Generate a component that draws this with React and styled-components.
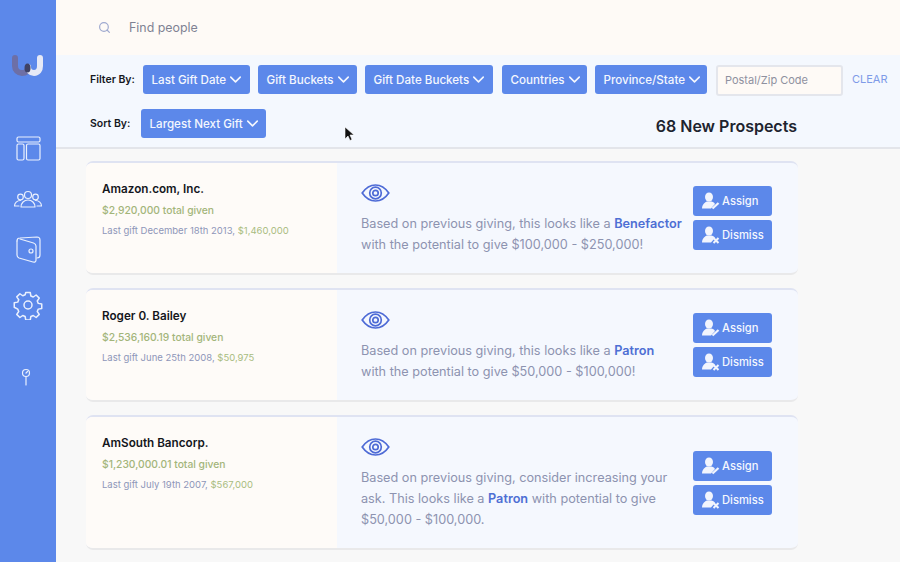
import styled, { createGlobalStyle } from "styled-components";
import { ChevronDown, Search } from "lucide-react";

const Global = createGlobalStyle`
  html, body {
    margin: 0;
    padding: 0;
    height: 100%;
    overflow: hidden;
    font-family: "Inter", "Liberation Sans", sans-serif;
  }
  * { box-sizing: border-box; }
`;

const Page = styled.div`
  display: flex;
  width: 900px;
  height: 562px;
  overflow: hidden;
  background: #f8f8f8;
  position: relative;
`;
const Sidebar = styled.nav`
  width: 56px;
  flex: none;
  background: #5c88ea;
  display: flex;
  flex-direction: column;
  align-items: center;
  padding-top: 52px;
`;
const Logo = styled.svg`
  width: 34px;
  height: 26px;
  flex: none;
  margin-bottom: 56px;
`;
const NavIcon = styled.svg`
  width: 30px;
  height: 30px;
  flex: none;
  margin-bottom: ${(p) => p.$gap}px;
  fill: none;
  stroke: #eaf0fd;
  stroke-width: 1.2;
  stroke-linecap: round;
  stroke-linejoin: round;
`;
const Main = styled.main`
  flex: 1;
  min-width: 0;
`;
const SearchBar = styled.div`
  height: 55px;
  background: #fefaf6;
  display: flex;
  align-items: center;
  padding-left: 42px;
  gap: 18px;
  color: #9fa9cf;
`;
const SearchText = styled.span`
  font-size: 12.4px;
  color: #7f8293;
`;
const FilterPanel = styled.section`
  height: 94px;
  background: #f4f8fe;
  border-bottom: 2px solid #e3e5ea;
  padding: 10px 12px 0 34px;
`;
const Row = styled.div`
  display: flex;
  align-items: flex-start;
  height: ${(p) => p.$h}px;
`;
const Label = styled.span`
  font-size: 10.5px;
  font-weight: 600;
  color: #16181f;
  line-height: 29px;
  width: ${(p) => p.$w}px;
  flex: none;
`;
const Drop = styled.button`
  height: 29px;
  width: ${(p) => p.$w}px;
  margin-right: ${(p) => p.$mr || 0}px;
  flex: none;
  border: 0;
  border-radius: 3px;
  background: #5c88ea;
  color: #f4f7fe;
  font: 500 11.6px "Inter", sans-serif;
  display: flex;
  align-items: center;
  padding: 0 0 0 8.5px;
  white-space: nowrap;
`;
const Zip = styled.div`
  width: 127px;
  height: 31px;
  flex: none;
  margin-left: 2px;
  border: 2px solid #e4e6ec;
  border-radius: 3px;
  background: #fefaf6;
  color: #8e919f;
  font-size: 11px;
  line-height: 27px;
  padding-left: 7px;
`;
const Clear = styled.span`
  margin-left: 9px;
  font-size: 11px;
  line-height: 29px;
  color: #7e9be8;
`;
const Count = styled.h2`
  margin: 0;
  width: 531px;
  text-align: right;
  font-size: 16px;
  font-weight: 600;
  line-height: 35px;
  color: #20232e;
`;
const List = styled.div`
  padding: 12px 0 0 30px;
  display: flex;
  flex-direction: column;
  gap: 13px;
`;
const Card = styled.article`
  width: 712px;
  height: ${(p) => p.$h}px;
  flex: none;
  display: flex;
  border-radius: 7px;
  overflow: hidden;
  border-top: 2px solid #dfe3f2;
  border-bottom: 2px solid #e9e9ea;
  background: #f5f8fe;
`;
const Donor = styled.div`
  width: 251px;
  flex: none;
  background: #fefbf8;
  padding: 18px 0 0 16px;
`;
const Name = styled.h3`
  margin: 0 0 5px;
  font-size: 11.7px;
  line-height: 16px;
  font-weight: 600;
  color: #14161c;
`;
const Total = styled.div`
  font-size: 10.3px;
  line-height: 16px;
  font-weight: 500;
  color: #a3b57a;
  margin-bottom: 5px;
`;
const Last = styled.div`
  font-size: 9.5px;
  line-height: 16px;
  color: #8e96b8;
`;
const Amount = styled.span`
  color: #a9bc80;
`;
const Pitch = styled.div`
  flex: 1;
  min-width: 0;
  padding: 21px 0 0 24px;
`;
const Eye = styled.svg`
  display: block;
  width: 29px;
  height: 18px;
  margin-bottom: 11px;
  fill: none;
  stroke: #4e6bd6;
  stroke-width: 1.7;
`;
const PitchText = styled.p`
  margin: 0;
  width: 327px;
  font-size: 12.7px;
  line-height: 21px;
  color: #8d93b0;
`;
const Strong = styled.b`
  font-weight: 600;
  color: #4e6fd4;
`;
const Actions = styled.div`
  width: 105px;
  flex: none;
  display: flex;
  flex-direction: column;
  justify-content: center;
  gap: 4px;
`;
const ActionBtn = styled.button`
  width: 79px;
  height: 30px;
  border: 0;
  border-radius: 3px;
  padding: 0 0 0 8px;
  background: #5c88ea;
  color: #f4f7fe;
  font: 500 11.2px "Inter", sans-serif;
  display: flex;
  align-items: center;
  gap: 1px;
`;
const ActionIcon = styled.svg`
  width: 20px;
  height: 20px;
  flex: none;
`;
const Cursor = styled.svg`
  position: absolute;
  left: 344px;
  top: 126px;
  width: 10px;
  height: 16px;
`;

const PersonIcon = ({ kind }) => (
  <ActionIcon viewBox="0 0 20 20">
    <ellipse cx="8" cy="6" rx="4" ry="4.600" fill="#f2f5fd" />
    <path d="M1 17.500c0-4 3-6.500 5-7h4.500c2 .5 3 1.500 3.500 2.500L10 17.500z" fill="#f2f5fd" />
    {kind === "assign" ? (
      <path d="M11.500 17.500l6-5.500" stroke="#f2f5fd" strokeWidth="2.200" />
    ) : (
      <path d="M12.500 13l5 5M17.500 13l-5 5" stroke="#f2f5fd" strokeWidth="2" />
    )}
  </ActionIcon>
);

const EyeIcon = () => (
  <Eye viewBox="0 0 29 18">
    <path d="M1.200 9C5 3.500 9.500 1 14.500 1S24 3.500 27.800 9C24 14.500 19.500 17 14.500 17S5 14.500 1.200 9z" />
    <circle cx="14.500" cy="9" r="5.800" />
    <circle cx="14.500" cy="9" r="2.700" />
  </Eye>
);

const filters = [
  { label: "Last Gift Date", w: 107, mr: 8 },
  { label: "Gift Buckets", w: 99, mr: 8 },
  { label: "Gift Date Buckets", w: 128, mr: 9 },
  { label: "Countries", w: 85, mr: 8 },
  { label: "Province/State", w: 112, mr: 7 },
];

const people = [
  {
    name: "Amazon.com, Inc.",
    total: "$2,920,000",
    date: "December 18th 2013",
    last: "$1,460,000",
    h: 114,
    text: (
      <>
        Based on previous giving, this looks like a <Strong>Benefactor</Strong> with the
        potential to give $100,000 - $250,000!
      </>
    ),
  },
  {
    name: "Roger 0. Bailey",
    total: "$2,536,160.19",
    date: "June 25th 2008",
    last: "$50,975",
    h: 114,
    text: (
      <>
        Based on previous giving, this looks like a <Strong>Patron</Strong>
        <br />
        with the potential to give $50,000 - $100,000!
      </>
    ),
  },
  {
    name: "AmSouth Bancorp.",
    total: "$1,230,000.01",
    date: "July 19th 2007",
    last: "$567,000",
    h: 135,
    text: (
      <>
        Based on previous giving, consider increasing your ask. This looks like a{" "}
        <Strong>Patron</Strong> with potential to give $50,000 - $100,000.
      </>
    ),
  },
];

const App = () => {
  return (
    <Page>
      <Global />
      <Sidebar>
        <Logo viewBox="0 0 34 26">
          <path d="M4 6v8c0 4 3 7 7 7s6-2 6-5" fill="none" stroke="#6d6fa6" strokeWidth="6" strokeLinecap="round" />
          <path d="M17 15c0 3 2 6 6 6s6-3 6-7V6" fill="none" stroke="#e6e9f6" strokeWidth="6" strokeLinecap="round" />
          <ellipse cx="16.500" cy="16" rx="3" ry="4.500" fill="#3f4266" />
        </Logo>
        <NavIcon $gap={21} viewBox="0 0 30 30">
          <rect x="4" y="3" width="23" height="5" rx="1.500" />
          <rect x="4" y="10" width="7" height="16" rx="1.500" />
          <rect x="13.500" y="10" width="13.500" height="16" rx="1.500" />
        </NavIcon>
        <NavIcon $gap={19} viewBox="0 0 30 30">
          <circle cx="15" cy="10" r="3.500" />
          <circle cx="7.500" cy="12" r="2.800" />
          <circle cx="22.500" cy="12" r="2.800" />
          <path d="M8 22c0-4 3-7 7-7s7 3 7 7z" />
          <path d="M6 21H1.500c0-3 2.500-5.500 6-5.500M24 21h4.500c0-3-2.500-5.500-6-5.500" />
        </NavIcon>
        <NavIcon $gap={26} viewBox="0 0 30 30">
          <path d="M4 7c0-2 1-3 3-3l17-1c2 0 3 1 3 3v15c0 2-1 3-3 3" />
          <path d="M4 7v14c0 1.500 1 2.500 2 3l14 4c2 .5 3-.5 3-2V12c0-1.500-1-2.500-2.500-3L7 5" />
          <circle cx="18" cy="17" r="2" />
        </NavIcon>
        <NavIcon $gap={42} viewBox="0 0 24 24">
          <circle cx="12" cy="12" r="3.200" />
          <path d="M10.200 2h3.600l.5 2.800 1.900.8 2.300-1.600 2.500 2.500-1.600 2.300.8 1.900 2.800.5v3.600l-2.800.5-.8 1.900 1.600 2.300-2.500 2.500-2.300-1.600-1.900.8-.5 2.800h-3.600l-.5-2.800-1.900-.8-2.300 1.600-2.500-2.500 1.600-2.300-.8-1.900L1 13.800v-3.600l2.800-.5.8-1.900L3 5.500 5.500 3l2.300 1.600 1.900-.8z" />
        </NavIcon>
        <NavIcon $gap={0} viewBox="0 0 30 30">
          <circle cx="13" cy="11" r="3.500" />
          <path d="M13 14.500V23M13 11l1.500-1.500" />
        </NavIcon>
      </Sidebar>
      <Main>
        <SearchBar>
          <Search size={13} strokeWidth={2.2} />
          <SearchText>Find people</SearchText>
        </SearchBar>
        <FilterPanel>
          <Row $h={44}>
            <Label $w={53}>Filter By:</Label>
            {filters.map((f) => (
              <Drop key={f.label} $w={f.w} $mr={f.mr}>
                {f.label}
                <ChevronDown size={19} strokeWidth={2} />
              </Drop>
            ))}
            <Zip>Postal/Zip Code</Zip>
            <Clear>CLEAR</Clear>
          </Row>
          <Row $h={36}>
            <Label $w={51}>Sort By:</Label>
            <Drop $w={125}>
              Largest Next Gift
              <ChevronDown size={19} strokeWidth={2} />
            </Drop>
            <Count>68 New Prospects</Count>
          </Row>
        </FilterPanel>
        <List>
          {people.map((p) => (
            <Card key={p.name} $h={p.h}>
              <Donor>
                <Name>{p.name}</Name>
                <Total>{p.total} total given</Total>
                <Last>
                  Last gift {p.date}, <Amount>{p.last}</Amount>
                </Last>
              </Donor>
              <Pitch>
                <EyeIcon />
                <PitchText>{p.text}</PitchText>
              </Pitch>
              <Actions>
                <ActionBtn>
                  <PersonIcon kind="assign" />
                  Assign
                </ActionBtn>
                <ActionBtn>
                  <PersonIcon kind="dismiss" />
                  Dismiss
                </ActionBtn>
              </Actions>
            </Card>
          ))}
        </List>
      </Main>
      <Cursor viewBox="0 0 10 16">
        <path d="M1 1v12l3-3 2 4.500 2-1-2-4.500h4z" fill="#111" stroke="#fff" strokeWidth=".6" />
      </Cursor>
    </Page>
  );
};

export default App;
